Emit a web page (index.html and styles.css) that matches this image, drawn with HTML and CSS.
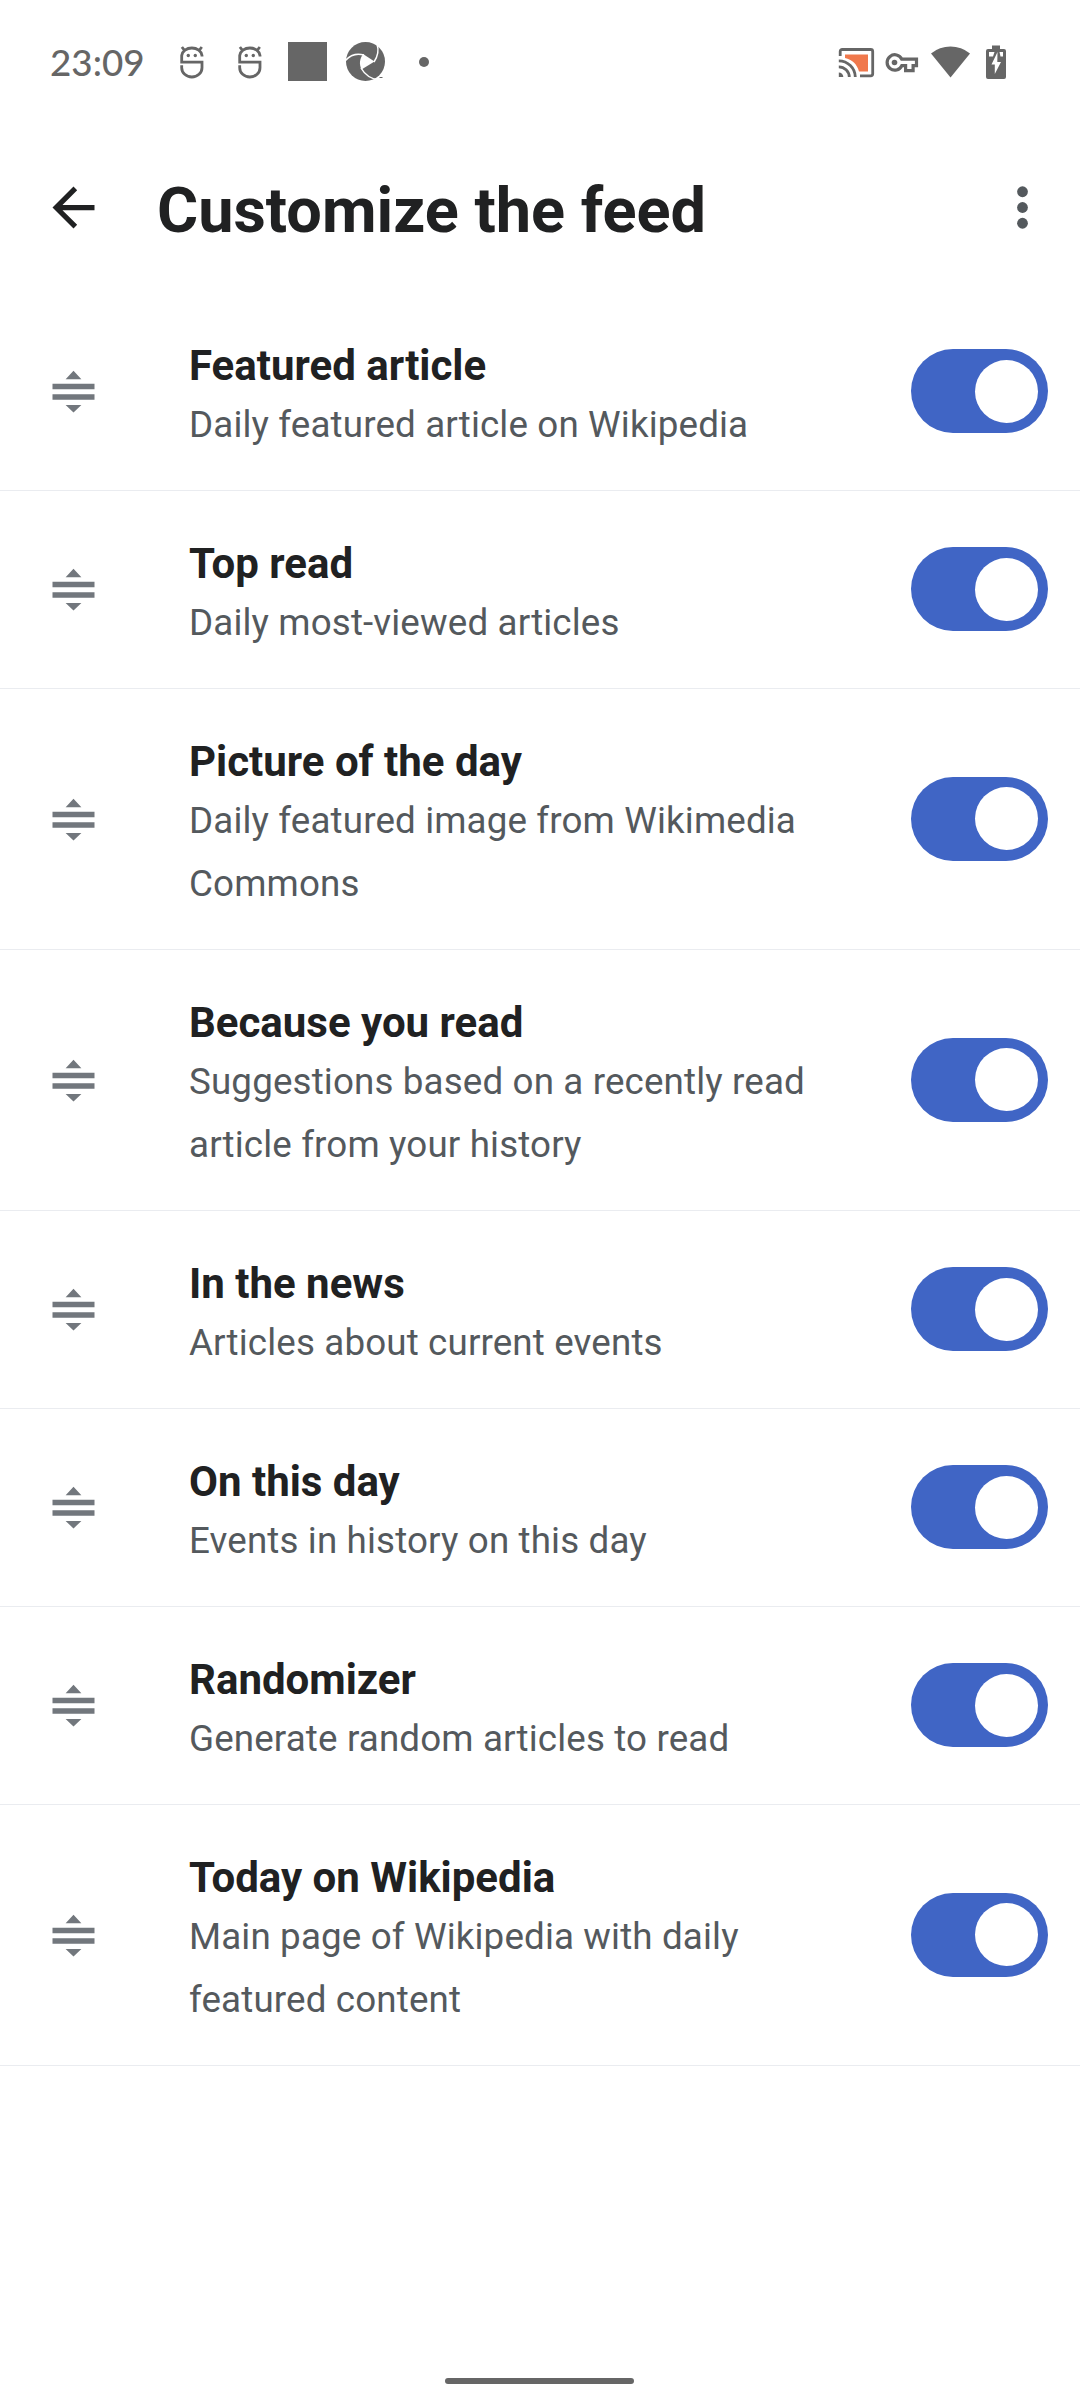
FILE: index.html
```html
<!DOCTYPE html>
<html lang="en">
<head>
<meta charset="utf-8">
<title>Customize the feed</title>
<link rel="stylesheet" href="styles.css">
</head>
<body>
<svg class="defs" width="0" height="0" aria-hidden="true">
  <symbol id="notif" viewBox="0 0 39 39">
    <g fill="none" stroke="#666" stroke-width="2.8">
      <path d="M30 14.500V13.500a10.200 8.300 0 0 0-20.300 0v6.700h20.300v5.500a10.150 9.300 0 0 1-20.300 0v-2.500"/>
      <path d="M12.500 8.300l-2.600-3.300M27.200 8.300l2.600-3.300"/>
    </g>
    <circle cx="16.300" cy="13.500" r="1.700" fill="#666"/><circle cx="23.300" cy="13.500" r="1.700" fill="#666"/>
  </symbol>
  <symbol id="drag" viewBox="0 0 24 24">
    <path fill="#72777d" d="M12 4.100l3 3.200H9zM4 9h16v2.100H4zM4 13h16v2.100H4zM9 17.100h6l-3 2.900z"/>
  </symbol>
</svg>
<div class="screen">
  <header class="status">
    <span class="clock">23:09</span>
    <div class="notifications">
      <svg width="39" height="39"><use href="#notif"/></svg>
      <svg width="39" height="39"><use href="#notif"/></svg>
      <span class="square"></span>
      <svg width="39" height="39" viewBox="0 0 39 39">
        <circle cx="19.500" cy="19.500" r="19.500" fill="#666"/>
        <path d="M17 12l11.500 7.500-13 8C13 22 13.500 17 17 12z" fill="#fff"/>
        <g fill="none" stroke="#fff" stroke-width="1.500">
          <path d="M-1 19C4 13 11 11 18 13"/>
          <path d="M31 2C33 8 32 14 28 20"/>
          <path d="M15 26c4 7 10 11 18 12"/>
        </g>
        <path d="M27 39l3-3 7-2 2 5z" fill="#fff"/>
        <path d="M33.500 35.500h3" stroke="#666"/>
      </svg>
      <span class="more"></span>
    </div>
    <div class="system">
      <svg class="cast" width="37" height="39" viewBox="0 0 37 39">
        <path d="M7 12.500h23v17H21C19 22 14 17.500 7 16z" fill="#f0784c"/>
        <g fill="none" stroke="#666" stroke-width="2.800">
          <path d="M2.200 14V9.500a2 2 0 0 1 2-2h28.500a2 2 0 0 1 2 2v22.300a2 2 0 0 1-2 2H22"/>
          <path d="M.8 18.800A16.500 16.500 0 0 1 17.300 35M.8 24.800A10.500 10.500 0 0 1 11.300 35"/>
        </g>
        <path d="M.8 30.500A4.500 4.500 0 0 1 5.300 35H.8z" fill="#666"/>
      </svg>
      <svg class="key" width="34" height="39" viewBox="0 0 34 39">
        <path d="M31.500 17.200H16.800a7.700 7.700 0 1 0 0 6.500h3.800v5h7.500v-5h3.400z" fill="none" stroke="#666" stroke-width="3.200"/>
        <circle cx="9.500" cy="20.500" r="2.800" fill="#666"/>
      </svg>
      <svg class="wifi" width="39" height="39" viewBox="0 0 39 39"><path d="M19.500 35.500L0 11.500a30.800 30.800 0 0 1 39 0z" fill="#666"/></svg>
      <svg class="battery" width="20" height="39" viewBox="0 0 20 39">
        <path d="M6 3.500h8V7h4a2 2 0 0 1 2 2v26a2 2 0 0 1-2 2H2a2 2 0 0 1-2-2V9a2 2 0 0 1 2-2h4z" fill="#666"/>
        <path d="M3 10h5.500L7 14.500H3zM13.500 10H17v4.500h-2.500zM11.500 10L5.500 22.500h3.300V32L15 20h-3.700z" fill="#fff"/>
      </svg>
    </div>
  </header>

  <div class="toolbar">
    <svg class="back" width="63" height="63" viewBox="0 0 24 24"><path d="M20 11H7.800l5.600-5.600L12 4l-8 8 8 8 1.400-1.400L7.800 13H20z" fill="#202122"/></svg>
    <h1 class="heading">Customize the feed</h1>
    <svg class="overflow" width="63" height="63" viewBox="0 0 24 24" fill="#54595d"><circle cx="12" cy="6" r="2.050"/><circle cx="12" cy="12" r="2.050"/><circle cx="12" cy="18" r="2.050"/></svg>
  </div>

  <main class="list">
    <section class="row"><svg class="handle"><use href="#drag"/></svg><div class="copy"><h2>Featured article</h2><p>Daily featured article on Wikipedia</p></div><span class="switch"></span></section>
    <section class="row"><svg class="handle"><use href="#drag"/></svg><div class="copy"><h2>Top read</h2><p>Daily most-viewed articles</p></div><span class="switch"></span></section>
    <section class="row"><svg class="handle"><use href="#drag"/></svg><div class="copy"><h2>Picture of the day</h2><p>Daily featured image from Wikimedia Commons</p></div><span class="switch"></span></section>
    <section class="row"><svg class="handle"><use href="#drag"/></svg><div class="copy"><h2>Because you read</h2><p>Suggestions based on a recently read article from your history</p></div><span class="switch"></span></section>
    <section class="row"><svg class="handle"><use href="#drag"/></svg><div class="copy"><h2>In the news</h2><p>Articles about current events</p></div><span class="switch"></span></section>
    <section class="row"><svg class="handle"><use href="#drag"/></svg><div class="copy"><h2>On this day</h2><p>Events in history on this day</p></div><span class="switch"></span></section>
    <section class="row"><svg class="handle"><use href="#drag"/></svg><div class="copy"><h2>Randomizer</h2><p>Generate random articles to read</p></div><span class="switch"></span></section>
    <section class="row"><svg class="handle"><use href="#drag"/></svg><div class="copy"><h2>Today on Wikipedia</h2><p>Main page of Wikipedia with daily featured content</p></div><span class="switch"></span></section>
  </main>

  <footer class="nav"><span class="pill"></span></footer>
</div>
</body>
</html>
```
FILE: styles.css
```css
* { box-sizing: border-box; }
body { margin: 0; background: #fff; font-family: Roboto, sans-serif; }
h1, h2, p { margin: 0; }
.defs { display: none; }
svg { display: block; flex: none; }

.screen {
  display: flex;
  flex-direction: column;
  width: 1080px;
  height: 2400px;
  background: #fff;
}

.status {
  display: flex;
  align-items: center;
  height: 134px;
  padding: 0 74px 11px 50px;
  color: #666;
}
.clock {
  width: 122px;
  font: 500 36.75px/44px Lato, sans-serif;
  white-space: nowrap;
}
.notifications { display: flex; align-items: center; gap: 19px; }
.square { width: 39px; height: 39px; background: #666; }
.more { width: 10px; height: 10px; margin-left: 15px; border-radius: 50%; background: #666; }
.system { display: flex; margin-left: auto; }
.key { margin-left: 10px; }
.wifi { margin-left: 12px; }
.battery { margin-left: 16px; }

.toolbar {
  display: flex;
  align-items: center;
  height: 147px;
  padding: 0 26px 0 42px;
}
.heading {
  flex: 1;
  margin-left: 52px;
  color: #202122;
  font-size: 63px;
  font-weight: 700;
  line-height: 74px;
  padding-top: 7px;
}

.list { padding-top: 12px; }
.row {
  display: flex;
  align-items: center;
  min-height: 198px;
  padding: 0 32px 0 42px;
  border-bottom: 1px solid #eaecf0;
}
.handle { width: 63px; height: 63px; }
.copy { width: 640px; margin-left: 84px; padding: 42px 0; }
.copy h2 {
  color: #202122;
  font-size: 42px;
  font-weight: 700;
  line-height: 50px;
  padding-top: 6px;
}
.copy p {
  color: #54595d;
  font-size: 36.75px;
  line-height: 63px;
  letter-spacing: 0.14px;
  margin: 2px 0 -8px;
}
.switch {
  display: flex;
  justify-content: flex-end;
  width: 137px;
  height: 84px;
  margin: -1px 0 0 auto;
  padding: 10.5px;
  border-radius: 42px;
  background: #4065c5;
}
.switch::after {
  content: "";
  width: 63px;
  height: 63px;
  border-radius: 50%;
  background: #fff;
}

.nav {
  display: flex;
  justify-content: center;
  align-items: flex-end;
  flex: 1;
  padding: 0 1px 16px 0;
}
.pill { width: 189px; height: 6px; border-radius: 3px; background: #666; }
```
